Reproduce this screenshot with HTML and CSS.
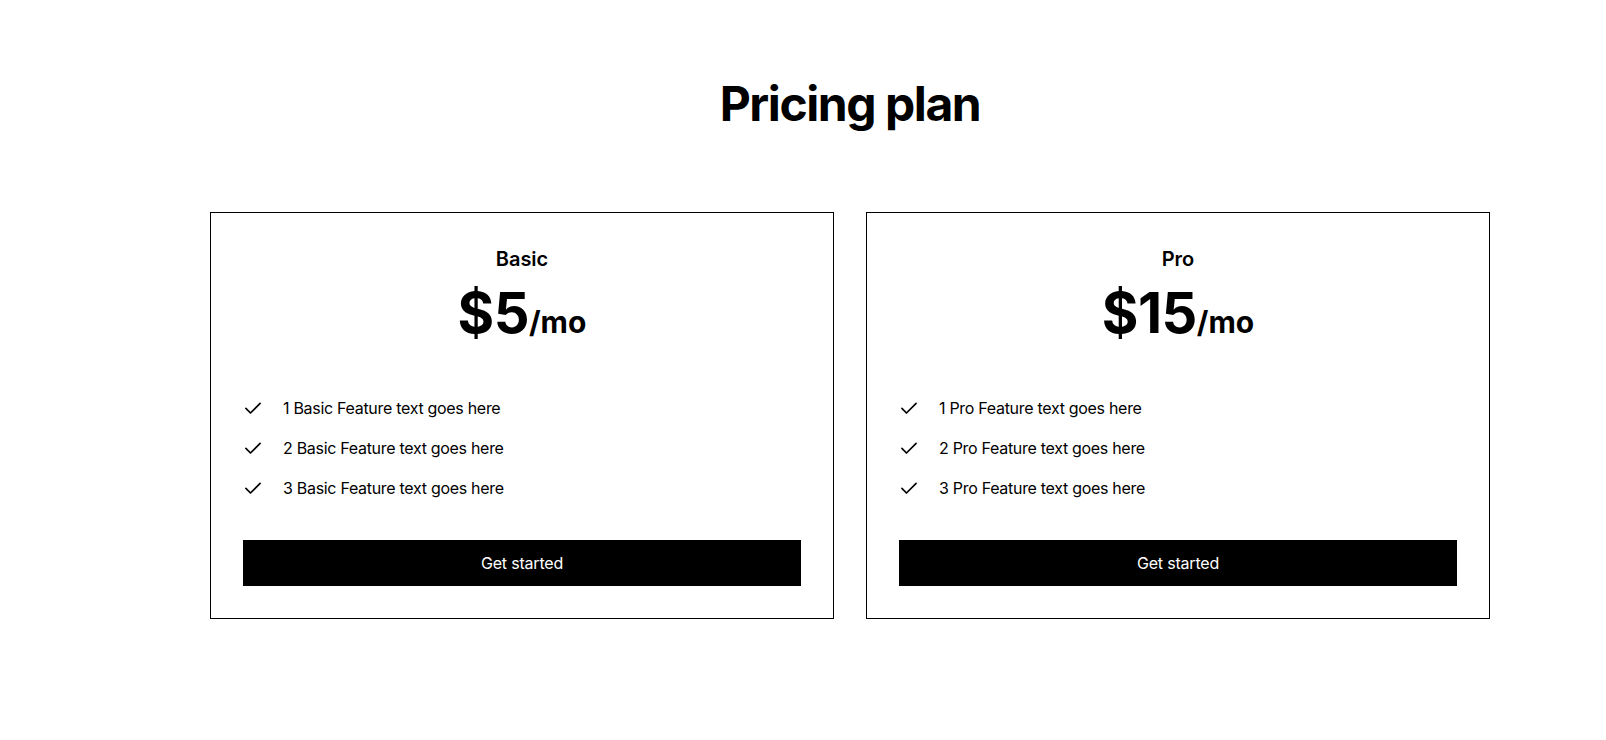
FILE: index.html
```html
<!DOCTYPE html>
<html lang="en">
<head>
<meta charset="utf-8">
<title>Pricing plan</title>
<link rel="stylesheet" href="styles.css">
</head>
<body>
<main class="page">
  <h1 class="title">Pricing plan</h1>
  <div class="plans">
    <section class="plan">
      <h2 class="plan-name">Basic</h2>
      <p class="price"><span class="amount">$5</span><span class="period">/mo</span></p>
      <ul class="features">
        <li class="feature"><svg class="check" viewBox="0 0 24 24" width="20" height="20"><path d="M3.5 12.5l5.5 5.5L20.5 6.5" fill="none" stroke="currentColor" stroke-width="2" stroke-linecap="round" stroke-linejoin="round"/></svg><span>1 Basic Feature text goes here</span></li>
        <li class="feature"><svg class="check" viewBox="0 0 24 24" width="20" height="20"><path d="M3.5 12.5l5.5 5.5L20.5 6.5" fill="none" stroke="currentColor" stroke-width="2" stroke-linecap="round" stroke-linejoin="round"/></svg><span>2 Basic Feature text goes here</span></li>
        <li class="feature"><svg class="check" viewBox="0 0 24 24" width="20" height="20"><path d="M3.5 12.5l5.5 5.5L20.5 6.5" fill="none" stroke="currentColor" stroke-width="2" stroke-linecap="round" stroke-linejoin="round"/></svg><span>3 Basic Feature text goes here</span></li>
      </ul>
      <button class="cta" type="button">Get started</button>
    </section>
    <section class="plan">
      <h2 class="plan-name">Pro</h2>
      <p class="price"><span class="amount">$15</span><span class="period">/mo</span></p>
      <ul class="features">
        <li class="feature"><svg class="check" viewBox="0 0 24 24" width="20" height="20"><path d="M3.5 12.5l5.5 5.5L20.5 6.5" fill="none" stroke="currentColor" stroke-width="2" stroke-linecap="round" stroke-linejoin="round"/></svg><span>1 Pro Feature text goes here</span></li>
        <li class="feature"><svg class="check" viewBox="0 0 24 24" width="20" height="20"><path d="M3.5 12.5l5.5 5.5L20.5 6.5" fill="none" stroke="currentColor" stroke-width="2" stroke-linecap="round" stroke-linejoin="round"/></svg><span>2 Pro Feature text goes here</span></li>
        <li class="feature"><svg class="check" viewBox="0 0 24 24" width="20" height="20"><path d="M3.5 12.5l5.5 5.5L20.5 6.5" fill="none" stroke="currentColor" stroke-width="2" stroke-linecap="round" stroke-linejoin="round"/></svg><span>3 Pro Feature text goes here</span></li>
      </ul>
      <button class="cta" type="button">Get started</button>
    </section>
  </div>
</main>
</body>
</html>
```

FILE: styles.css
```css
* { box-sizing: border-box; }
html, body { margin: 0; padding: 0; background: #fff; }
body {
  font-family: Inter, "Liberation Sans", sans-serif;
  color: #000;
}
.page {
  width: 1280px;
  margin-left: 210px;
  padding-top: 72px;
  display: flex;
  flex-direction: column;
  align-items: center;
}
.title {
  margin: 0;
  font-size: 48px;
  line-height: 64px;
  font-weight: 700;
  letter-spacing: -0.03em;
}
.plans {
  margin-top: 76px;
  width: 100%;
  display: grid;
  grid-template-columns: 1fr 1fr;
  gap: 32px;
}
.plan {
  border: 1px solid #000;
  padding: 32px;
  display: flex;
  flex-direction: column;
}
.plan-name {
  margin: 0;
  text-align: center;
  font-size: 20px;
  line-height: 28px;
  font-weight: 600;
}
.price {
  margin: 8px 0 0;
  text-align: center;
  line-height: 64px;
  font-weight: 700;
}
.amount { font-size: 56px; letter-spacing: -0.01em; }
.period { font-size: 30px; }
.features {
  list-style: none;
  margin: 37px 0 0;
  padding: 0;
  display: flex;
  flex-direction: column;
  gap: 16px;
}
.feature {
  display: flex;
  align-items: center;
  gap: 20px;
  font-size: 16px;
  line-height: 24px;
  letter-spacing: -0.3px;
}
.check { flex: none; }
.cta {
  margin-top: 40px;
  height: 46px;
  border: 0;
  background: #000;
  color: #fff;
  font-family: inherit;
  font-size: 16px;
  font-weight: 400;
  letter-spacing: -0.2px;
}
```
